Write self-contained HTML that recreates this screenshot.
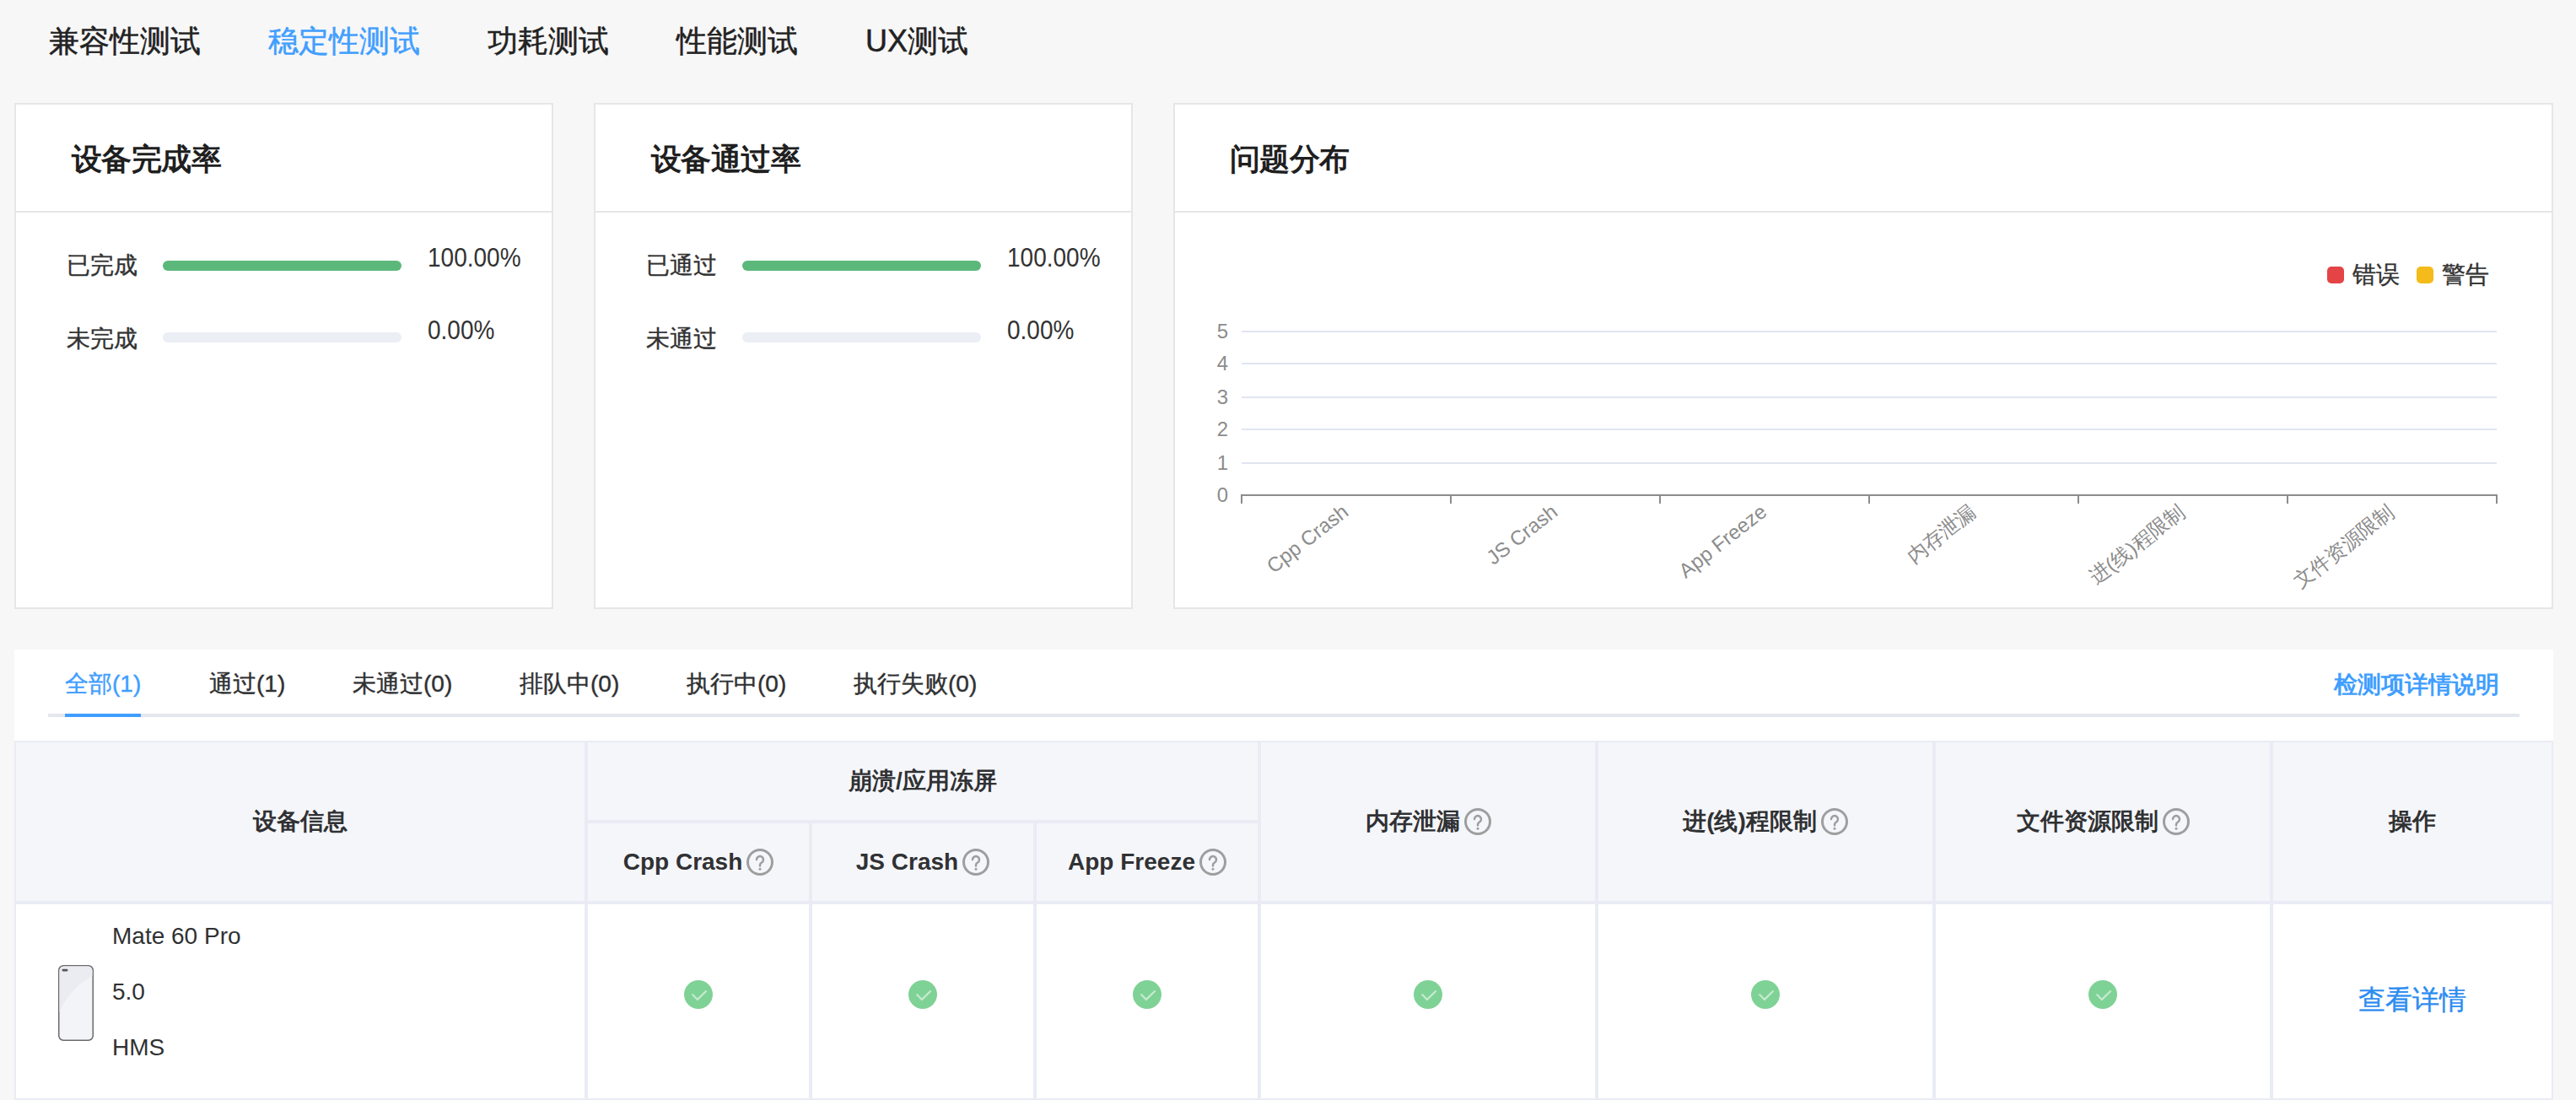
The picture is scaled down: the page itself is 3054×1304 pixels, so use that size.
<!DOCTYPE html>
<html><head><meta charset="utf-8">
<style>
*{margin:0;padding:0;box-sizing:border-box;}
html,body{width:3054px;height:1304px;overflow:hidden;background:#f7f7f7;font-family:"Liberation Sans",sans-serif;color:#303133;}
.a{position:absolute;white-space:nowrap;}
.tab{font-size:36px;line-height:36px;color:#222;top:31px;-webkit-text-stroke:0.5px currentColor;}
.tab.on{color:#409eff;}
.panel{position:absolute;top:122px;height:600px;background:#fff;border:2px solid #e6e6e6;}
.ph{position:absolute;left:0;right:0;top:0;height:128px;border-bottom:2px solid #e6e6e6;}
.pt{font-size:36px;line-height:36px;font-weight:bold;color:#1f1f1f;top:47px;letter-spacing:-0.6px;}
.lbl{font-size:28px;line-height:28px;color:#333;-webkit-text-stroke:0.4px currentColor;}
.bar{position:absolute;height:12px;border-radius:6px;background:#ebeef5;width:283px;}
.bar.g{background:#5cb87a;}
.pct{font-size:28px;line-height:28px;color:#333;transform:scaleY(1.14);}
.ylab{font-size:24px;line-height:24px;color:#8c8c8c;left:1400px;width:56px;text-align:right;}
.xlab{font-size:24px;line-height:24px;color:#8c8c8c;width:400px;text-align:right;transform-origin:100% 0;transform:rotate(-38deg);}
.leg{font-size:28px;line-height:28px;color:#333;-webkit-text-stroke:0.4px currentColor;}
.btab{font-size:28px;line-height:28px;color:#303133;top:797px;-webkit-text-stroke:0.4px currentColor;}
.btab.on{color:#409eff;}
.hc{position:absolute;display:flex;align-items:center;justify-content:center;font-size:28px;font-weight:bold;color:#303133;white-space:nowrap;}
.q{display:inline-block;width:32px;height:32px;margin-left:5px;}
.chk{position:absolute;width:34px;height:34px;}
.dev{font-size:28px;line-height:28px;color:#303133;left:133px;}
</style></head><body>
<div class="a tab" style="left:58px">兼容性测试</div>
<div class="a tab on" style="left:318px">稳定性测试</div>
<div class="a tab" style="left:578px">功耗测试</div>
<div class="a tab" style="left:802px">性能测试</div>
<div class="a tab" style="left:1026px">UX测试</div>

<div class="panel" style="left:17px;width:639px">
  <div class="ph"></div>
  <div class="a pt" style="left:66px">设备完成率</div>
  <div class="a lbl" style="left:60px;top:177px">已完成</div>
  <div class="bar g" style="left:174px;top:185px"></div>
  <div class="a pct" style="left:488px;top:168px">100.00%</div>
  <div class="a lbl" style="left:60px;top:264px">未完成</div>
  <div class="bar" style="left:174px;top:270px"></div>
  <div class="a pct" style="left:488px;top:254px">0.00%</div>
</div>
<div class="panel" style="left:704px;width:639px">
  <div class="ph"></div>
  <div class="a pt" style="left:66px">设备通过率</div>
  <div class="a lbl" style="left:60px;top:177px">已通过</div>
  <div class="bar g" style="left:174px;top:185px"></div>
  <div class="a pct" style="left:488px;top:168px">100.00%</div>
  <div class="a lbl" style="left:60px;top:264px">未通过</div>
  <div class="bar" style="left:174px;top:270px"></div>
  <div class="a pct" style="left:488px;top:254px">0.00%</div>
</div>
<div class="panel" style="left:1391px;width:1636px">
  <div class="ph"></div>
  <div class="a pt" style="left:65px">问题分布</div>
</div>
<svg class="a" style="left:0;top:0" width="3054" height="1304">
<rect x="1472" y="392" width="1488" height="2" fill="#e0e6f1"/>
<rect x="1472" y="430" width="1488" height="2" fill="#e0e6f1"/>
<rect x="1472" y="470" width="1488" height="2" fill="#e0e6f1"/>
<rect x="1472" y="508" width="1488" height="2" fill="#e0e6f1"/>
<rect x="1472" y="548" width="1488" height="2" fill="#e0e6f1"/>
<rect x="1471" y="586" width="1490" height="2" fill="#8c8c8c"/>
<rect x="1471" y="586" width="2" height="11" fill="#8c8c8c"/>
<rect x="1719" y="586" width="2" height="11" fill="#8c8c8c"/>
<rect x="1967" y="586" width="2" height="11" fill="#8c8c8c"/>
<rect x="2215" y="586" width="2" height="11" fill="#8c8c8c"/>
<rect x="2463" y="586" width="2" height="11" fill="#8c8c8c"/>
<rect x="2711" y="586" width="2" height="11" fill="#8c8c8c"/>
<rect x="2959" y="586" width="2" height="11" fill="#8c8c8c"/>
</svg>
<div class="a ylab" style="top:575px">0</div>
<div class="a ylab" style="top:381px">5</div>
<div class="a ylab" style="top:419px">4</div>
<div class="a ylab" style="top:459px">3</div>
<div class="a ylab" style="top:497px">2</div>
<div class="a ylab" style="top:537px">1</div>
<div class="a xlab" style="left:1188px;top:594px">Cpp Crash</div>
<div class="a xlab" style="left:1436px;top:594px">JS Crash</div>
<div class="a xlab" style="left:1684px;top:594px">App Freeze</div>
<div class="a xlab" style="left:1932px;top:594px">内存泄漏</div>
<div class="a xlab" style="left:2180px;top:594px">进(线)程限制</div>
<div class="a xlab" style="left:2428px;top:594px">文件资源限制</div>
<div class="a" style="left:2759px;top:316px;width:20px;height:20px;border-radius:5px;background:#e44446"></div>
<div class="a leg" style="left:2789px;top:312px">错误</div>
<div class="a" style="left:2865px;top:316px;width:20px;height:20px;border-radius:5px;background:#f4bb1a"></div>
<div class="a leg" style="left:2895px;top:312px">警告</div>
<div class="a" style="left:17px;top:770px;width:3010px;height:534px;background:#fff"></div>
<div class="a btab on" style="left:77px">全部(1)</div>
<div class="a btab" style="left:248px">通过(1)</div>
<div class="a btab" style="left:418px">未通过(0)</div>
<div class="a btab" style="left:616px">排队中(0)</div>
<div class="a btab" style="left:814px">执行中(0)</div>
<div class="a btab" style="left:1012px">执行失败(0)</div>
<div class="a" style="left:57px;top:846px;width:2930px;height:4px;background:#e4e7ed"></div>
<div class="a" style="left:77px;top:846px;width:90px;height:4px;background:#409eff"></div>
<div class="a" style="left:2767px;top:798px;font-size:28px;line-height:28px;font-weight:bold;color:#409eff">检测项详情说明</div>
<div class="a" style="left:17px;top:878px;width:3010px;height:426px;border:2px solid #e9ecf4;background:#fff"></div>
<div class="a" style="left:19px;top:880px;width:3006px;height:188px;background:#f5f6fa"></div>
<div class="a" style="left:19px;top:1068px;width:3006px;height:4px;background:#e9ecf4"></div>
<div class="a" style="left:697px;top:972px;width:794px;height:4px;background:#e9ecf4"></div>
<div class="a" style="left:693px;top:880px;width:4px;height:422px;background:#e9ecf4"></div>
<div class="a" style="left:959px;top:976px;width:4px;height:326px;background:#e9ecf4"></div>
<div class="a" style="left:1225px;top:976px;width:4px;height:326px;background:#e9ecf4"></div>
<div class="a" style="left:1491px;top:880px;width:4px;height:422px;background:#e9ecf4"></div>
<div class="a" style="left:1891px;top:880px;width:4px;height:422px;background:#e9ecf4"></div>
<div class="a" style="left:2291px;top:880px;width:4px;height:422px;background:#e9ecf4"></div>
<div class="a" style="left:2691px;top:880px;width:4px;height:422px;background:#e9ecf4"></div>
<div class="hc" style="left:19px;top:880px;width:674px;height:188px">设备信息</div>
<div class="hc" style="left:697px;top:880px;width:794px;height:92px">崩溃/应用冻屏</div>
<div class="hc" style="left:697px;top:976px;width:262px;height:92px">Cpp Crash<svg class="q" viewBox="0 0 32 32"><circle cx="16" cy="16" r="14.5" fill="none" stroke="#9e9e9e" stroke-width="3"/><path d="M12 13a4 4 0 1 1 6 3.5c-1.3.8-2 1.5-2 3v1" fill="none" stroke="#9e9e9e" stroke-width="2.5" stroke-linecap="round"/><circle cx="16" cy="24.2" r="1.5" fill="#9e9e9e"/></svg></div>
<div class="hc" style="left:963px;top:976px;width:262px;height:92px">JS Crash<svg class="q" viewBox="0 0 32 32"><circle cx="16" cy="16" r="14.5" fill="none" stroke="#9e9e9e" stroke-width="3"/><path d="M12 13a4 4 0 1 1 6 3.5c-1.3.8-2 1.5-2 3v1" fill="none" stroke="#9e9e9e" stroke-width="2.5" stroke-linecap="round"/><circle cx="16" cy="24.2" r="1.5" fill="#9e9e9e"/></svg></div>
<div class="hc" style="left:1229px;top:976px;width:262px;height:92px">App Freeze<svg class="q" viewBox="0 0 32 32"><circle cx="16" cy="16" r="14.5" fill="none" stroke="#9e9e9e" stroke-width="3"/><path d="M12 13a4 4 0 1 1 6 3.5c-1.3.8-2 1.5-2 3v1" fill="none" stroke="#9e9e9e" stroke-width="2.5" stroke-linecap="round"/><circle cx="16" cy="24.2" r="1.5" fill="#9e9e9e"/></svg></div>
<div class="hc" style="left:1495px;top:880px;width:396px;height:188px">内存泄漏<svg class="q" viewBox="0 0 32 32"><circle cx="16" cy="16" r="14.5" fill="none" stroke="#9e9e9e" stroke-width="3"/><path d="M12 13a4 4 0 1 1 6 3.5c-1.3.8-2 1.5-2 3v1" fill="none" stroke="#9e9e9e" stroke-width="2.5" stroke-linecap="round"/><circle cx="16" cy="24.2" r="1.5" fill="#9e9e9e"/></svg></div>
<div class="hc" style="left:1895px;top:880px;width:396px;height:188px">进(线)程限制<svg class="q" viewBox="0 0 32 32"><circle cx="16" cy="16" r="14.5" fill="none" stroke="#9e9e9e" stroke-width="3"/><path d="M12 13a4 4 0 1 1 6 3.5c-1.3.8-2 1.5-2 3v1" fill="none" stroke="#9e9e9e" stroke-width="2.5" stroke-linecap="round"/><circle cx="16" cy="24.2" r="1.5" fill="#9e9e9e"/></svg></div>
<div class="hc" style="left:2295px;top:880px;width:396px;height:188px">文件资源限制<svg class="q" viewBox="0 0 32 32"><circle cx="16" cy="16" r="14.5" fill="none" stroke="#9e9e9e" stroke-width="3"/><path d="M12 13a4 4 0 1 1 6 3.5c-1.3.8-2 1.5-2 3v1" fill="none" stroke="#9e9e9e" stroke-width="2.5" stroke-linecap="round"/><circle cx="16" cy="24.2" r="1.5" fill="#9e9e9e"/></svg></div>
<div class="hc" style="left:2695px;top:880px;width:330px;height:188px">操作</div>
<svg class="a" style="left:68.5px;top:1144px" width="42" height="90" viewBox="0 0 42 90"><rect x="0.75" y="0.75" width="40.5" height="88.5" rx="5.5" fill="#f3f4f8" stroke="#6b6b6b" stroke-width="1.5"/><path d="M1.5 7a5.5 5.5 0 0 1 5.5-5.5h28a5.5 5.5 0 0 1 5.5 5.5v6C26 20 11 34 1.5 56z" fill="#ebecf1"/><rect x="4.5" y="4.8" width="7" height="2.6" rx="1.3" fill="#555"/></svg>
<div class="a dev" style="top:1096px">Mate 60 Pro</div>
<div class="a dev" style="top:1162px">5.0</div>
<div class="a dev" style="top:1228px">HMS</div>
<div class="chk" style="left:811px;top:1162px"><svg viewBox="0 0 34 34" width="34" height="34"><circle cx="17" cy="17" r="17" fill="#7fd295"/><path d="M9.6 16.4l6.3 6.5 10.7-10.4" fill="none" stroke="#c6ead0" stroke-width="2.2"/></svg></div>
<div class="chk" style="left:1077px;top:1162px"><svg viewBox="0 0 34 34" width="34" height="34"><circle cx="17" cy="17" r="17" fill="#7fd295"/><path d="M9.6 16.4l6.3 6.5 10.7-10.4" fill="none" stroke="#c6ead0" stroke-width="2.2"/></svg></div>
<div class="chk" style="left:1343px;top:1162px"><svg viewBox="0 0 34 34" width="34" height="34"><circle cx="17" cy="17" r="17" fill="#7fd295"/><path d="M9.6 16.4l6.3 6.5 10.7-10.4" fill="none" stroke="#c6ead0" stroke-width="2.2"/></svg></div>
<div class="chk" style="left:1676px;top:1162px"><svg viewBox="0 0 34 34" width="34" height="34"><circle cx="17" cy="17" r="17" fill="#7fd295"/><path d="M9.6 16.4l6.3 6.5 10.7-10.4" fill="none" stroke="#c6ead0" stroke-width="2.2"/></svg></div>
<div class="chk" style="left:2076px;top:1162px"><svg viewBox="0 0 34 34" width="34" height="34"><circle cx="17" cy="17" r="17" fill="#7fd295"/><path d="M9.6 16.4l6.3 6.5 10.7-10.4" fill="none" stroke="#c6ead0" stroke-width="2.2"/></svg></div>
<div class="chk" style="left:2476px;top:1162px"><svg viewBox="0 0 34 34" width="34" height="34"><circle cx="17" cy="17" r="17" fill="#7fd295"/><path d="M9.6 16.4l6.3 6.5 10.7-10.4" fill="none" stroke="#c6ead0" stroke-width="2.2"/></svg></div>
<div class="a" style="left:2796px;top:1169px;font-size:32px;line-height:32px;color:#2d8cf0;-webkit-text-stroke:0.4px currentColor">查看详情</div>
</body></html>
